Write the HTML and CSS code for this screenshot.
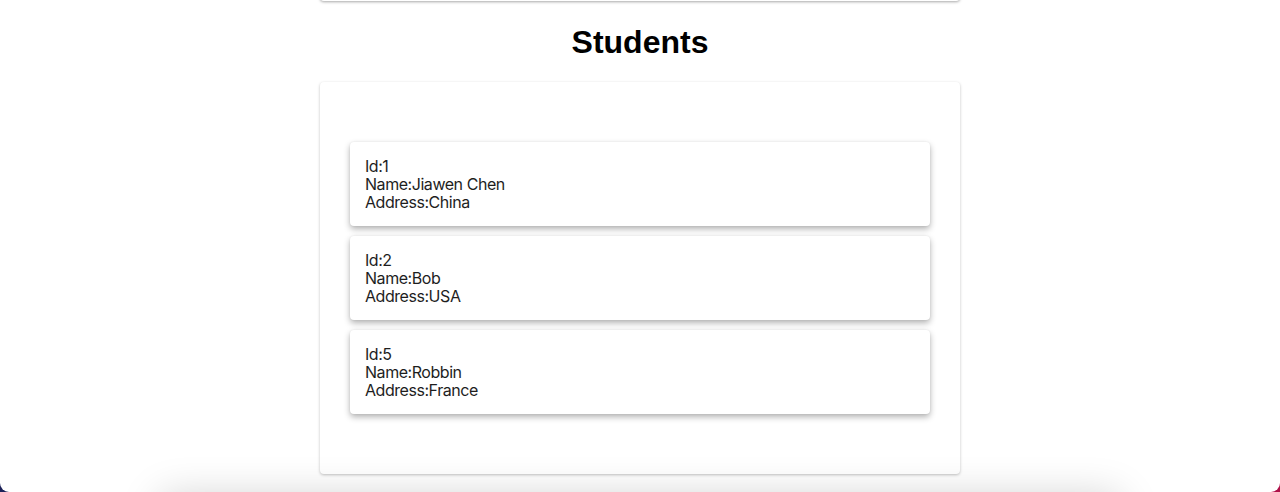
FILE: index.html
```html
<!DOCTYPE html>
<html>
<head>
<meta charset="utf-8">
<link rel="stylesheet" href="styles.css">
</head>
<body>
<div class="page">
  <div class="prev-card"></div>
  <h1 class="title">Students</h1>
  <div class="panel">
    <div class="student">
      <div>Id:1</div>
      <div>Name:Jiawen Chen</div>
      <div>Address:China</div>
    </div>
    <div class="student">
      <div>Id:2</div>
      <div>Name:Bob</div>
      <div>Address:USA</div>
    </div>
    <div class="student">
      <div>Id:5</div>
      <div>Name:Robbin</div>
      <div>Address:France</div>
    </div>
  </div>
  <div class="next-card"></div>
</div>
</body>
</html>
```

FILE: styles.css
```css
html, body {
  margin: 0;
  padding: 0;
}
body {
  background: linear-gradient(90deg, #1c2158 0%, #5a1a5a 50%, #b0124a 100%);
  height: 492px;
  overflow: hidden;
}
.page {
  background: #ffffff;
  height: 492px;
  border-radius: 0 0 9px 9px;
  overflow: hidden;
  display: flex;
  flex-direction: column;
  align-items: center;
}
.prev-card {
  width: 640px;
  height: 60px;
  margin-top: -59px;
  flex: none;
  background: #fff;
  border-radius: 4px;
  box-shadow: 0 1px 3px rgba(0, 0, 0, 0.35);
}
.title {
  margin: 23px 0 21px;
  font-family: "Liberation Sans", Arial, sans-serif;
  font-weight: bold;
  font-size: 32px;
  line-height: 37px;
  color: #000;
}
.panel {
  width: 640px;
  box-sizing: border-box;
  padding: 60px 30px;
  background: #fff;
  border-radius: 4px;
  box-shadow: 0 1px 3px rgba(0, 0, 0, 0.25);
  display: flex;
  flex-direction: column;
  gap: 10px;
  flex: none;
}
.student {
  padding: 15px;
  border-radius: 4px;
  background: #fff;
  box-shadow: 0 3px 6px rgba(0, 0, 0, 0.3), 0 0 2px rgba(0, 0, 0, 0.08);
  font-family: Inter, "Noto Sans", sans-serif;
  font-size: 16px;
  letter-spacing: -0.45px;
  line-height: 18px;
  color: #1e1e1e;
}
.next-card {
  flex: none;
  width: 960px;
  height: 100px;
  margin-top: 22px;
  background: #fff;
  border-radius: 8px;
  box-shadow: 0 0 40px rgba(0, 0, 0, 0.18);
}
```
